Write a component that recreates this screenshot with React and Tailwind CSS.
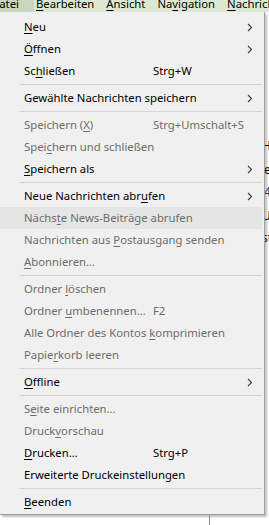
import React from 'react';

const SEP = 'sep';

// key = index of the underlined access key
const items = [
  { label: 'Neu', key: 0, sub: true },
  { label: 'Öffnen', key: 0, sub: true },
  { label: 'Schließen', key: 2, shortcut: 'Strg+W' },
  SEP,
  { label: 'Gewählte Nachrichten speichern', sub: true },
  SEP,
  { label: 'Speichern (X)', key: 11, shortcut: 'Strg+Umschalt+S', disabled: true },
  { label: 'Speichern und schließen', key: 4, disabled: true },
  { label: 'Speichern als', key: 0, sub: true },
  SEP,
  { label: 'Neue Nachrichten abrufen', key: 20, sub: true },
  { label: 'Nächste News-Beiträge abrufen', key: 5, disabled: true, active: true },
  { label: 'Nachrichten aus Postausgang senden', key: 16, disabled: true },
  { label: 'Abonnieren…', key: 0, disabled: true },
  SEP,
  { label: 'Ordner löschen', key: 7, disabled: true },
  { label: 'Ordner umbenennen…', key: 7, shortcut: 'F2', disabled: true },
  { label: 'Alle Ordner des Kontos komprimieren', key: 23, disabled: true },
  { label: 'Papierkorb leeren', key: 5, disabled: true },
  SEP,
  { label: 'Offline', key: 0, sub: true },
  SEP,
  { label: 'Seite einrichten…', key: 1, disabled: true },
  { label: 'Druckvorschau', key: 5, disabled: true },
  { label: 'Drucken…', key: 0, shortcut: 'Strg+P' },
  { label: 'Erweiterte Druckeinstellungen' },
  SEP,
  { label: 'Beenden', key: 0 },
];

function Label({ text, k }) {
  if (k === undefined) return text;
  return (
    <>
      {text.slice(0, k)}
      <span className="underline underline-offset-2">{text[k]}</span>
      {text.slice(k + 1)}
    </>
  );
}

function Chevron() {
  return (
    <svg width="6" height="9" viewBox="0 0 6 9" className="shrink-0">
      <path d="M1 1l3.5 3.5L1 8" fill="none" stroke="#3c3c3c" strokeWidth="1.1" />
    </svg>
  );
}

export default function App() {
  return (
    <div
      className="relative w-[269px] h-[525px] overflow-hidden bg-white text-[11.3px]"
      style={{ fontFamily: '"Noto Sans", "Open Sans", sans-serif' }}
    >
      {/* menubar, mostly scrolled out of view */}
      <div className="h-[12px] overflow-hidden bg-[#dde8d3] flex">
        <div className="flex -mt-[6px] -ml-[9px] text-black leading-[19px] whitespace-nowrap">
          <span className="pr-[15px] bg-[#c9d6be]"><Label text="Datei" k={0} /></span>
          <span className="pl-[2px] pr-[6px]"><Label text="Bearbeiten" k={0} /></span>
          <span className="px-[6px]"><Label text="Ansicht" k={0} /></span>
          <span className="px-[6px]"><Label text="Navigation" k={2} /></span>
          <span className="px-[6px]"><Label text="Nachrichten" k={0} /></span>
        </div>
      </div>

      <div className="flex">
        {/* dropdown */}
        <div className="w-[265px] shrink-0 bg-[#f0f0f0] border-r border-b border-[#a0a0a0] shadow-[2px_2px_2px_rgba(0,0,0,0.25)] pt-[4px] pb-[1px] pr-[2px]">
          {items.map((it, i) =>
            it === SEP ? (
              <div key={i} className="h-[5px] flex items-center pl-[20px]">
                <div className="w-full border-t border-[#d5d5d5]" />
              </div>
            ) : (
              <div
                key={i}
                className={`h-[22px] flex items-center whitespace-nowrap pl-[24px] pr-[9px] ${
                  it.active ? 'bg-[#e5e5e5]' : ''
                } ${it.disabled ? 'text-[#6d6d6d]' : 'text-black'}`}
              >
                <span className={it.shortcut ? 'w-[129px] shrink-0' : 'flex-1'}>
                  <Label text={it.label} k={it.key} />
                </span>
                {it.shortcut && <span className="flex-1">{it.shortcut}</span>}
                {it.sub && <Chevron />}
              </div>
            )
          )}
        </div>

        {/* sliver of the window behind */}
        <div className="flex-1 overflow-hidden text-[12px] leading-none">
          <div className="h-[128px]" />
          <div className="h-[24px] -ml-[3px] text-black">H</div>
          <div className="h-[22px] -ml-[1px] text-black">e</div>
          <div className="h-[24px] -ml-[1px] text-[#1f3a7a]">4</div>
          <div className="h-[22px] -ml-[3px] text-black">U</div>
          <div className="h-[22px] -ml-[3px] text-[#3a1010]">st</div>
        </div>
      </div>

      {/* content below the menu */}
      <div className="flex h-[20px]">
        <div className="w-[210px] border-r border-[#8a8a8a]" />
      </div>
    </div>
  );
}
